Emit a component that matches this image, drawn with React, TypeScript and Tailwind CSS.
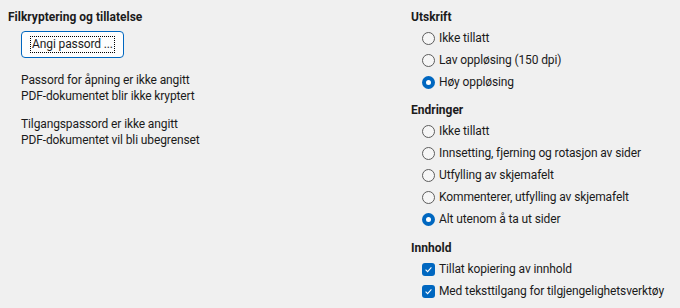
import React from "react";

const font = { fontFamily: 'Roboto, "Noto Sans", sans-serif' };

function Radio({ label, checked }: { label: string; checked?: boolean }) {
  return (
    <div className="flex items-center h-[22px] pl-[11px]">
      {checked ? (
        <span className="w-[13px] h-[13px] rounded-full bg-[#0067c0] flex items-center justify-center">
          <span className="w-[5px] h-[5px] rounded-full bg-white" />
        </span>
      ) : (
        <span className="w-[13px] h-[13px] rounded-full border border-[#5c5c5c] bg-[#f6f6f6]" />
      )}
      <span className="ml-[4px] text-[12px] tracking-[-0.12px] text-[#1b1b1b]">{label}</span>
    </div>
  );
}

function Check({ label }: { label: string }) {
  return (
    <div className="flex items-center h-[22px] pl-[11px]">
      <span className="w-[13px] h-[13px] rounded-[3px] bg-[#0067c0] flex items-center justify-center">
        <svg width="9" height="9" viewBox="0 0 9 9">
          <path d="M1.6 4.7 L3.6 6.6 L7.4 2.4" stroke="white" strokeWidth="1.1" fill="none" />
        </svg>
      </span>
      <span className="ml-[4px] text-[12px] tracking-[-0.12px] text-[#1b1b1b]">{label}</span>
    </div>
  );
}

export default function App() {
  return (
    <div className="w-[680px] h-[308px] bg-[#f0f0f0] flex text-[#1b1b1b]" style={font}>
      <div className="w-[403px] pl-[8px] pt-[8px]">
        <div className="text-[12px] font-bold leading-[18px]">Filkryptering og tillatelse</div>
        <div className="pl-[13px] mt-[5px]">
          <button className="w-[103px] h-[27px] border border-[#0067c0] rounded-[4px] bg-[#fdfdfd] flex items-center justify-center">
            <span className="text-[12px] tracking-[-0.12px] leading-[15px] px-[1px] outline outline-1 outline-dotted outline-black">Angi passord ...</span>
          </button>
          <div className="mt-[14px] text-[12px] tracking-[-0.12px] leading-[16px]">
            <div>Passord for åpning er ikke angitt</div>
            <div>PDF-dokumentet blir ikke kryptert</div>
          </div>
          <div className="mt-[12px] text-[12px] tracking-[-0.12px] leading-[16px]">
            <div>Tilgangspassord er ikke angitt</div>
            <div>PDF-dokumentet vil bli ubegrenset</div>
          </div>
        </div>
      </div>
      <div className="flex-1 pl-[8px] pt-[8px]">
        <div className="text-[12px] font-bold leading-[18px]">Utskrift</div>
        <div className="mt-[1px]">
          <Radio label="Ikke tillatt" />
          <Radio label="Lav oppløsing (150 dpi)" />
          <Radio label="Høy oppløsing" checked />
        </div>
        <div className="text-[12px] font-bold leading-[18px] mt-[8px]">Endringer</div>
        <div className="mt-[1px]">
          <Radio label="Ikke tillatt" />
          <Radio label="Innsetting, fjerning og rotasjon av sider" />
          <Radio label="Utfylling av skjemafelt" />
          <Radio label="Kommenterer, utfylling av skjemafelt" />
          <Radio label="Alt utenom å ta ut sider" checked />
        </div>
        <div className="text-[12px] font-bold leading-[18px] mt-[9px]">Innhold</div>
        <div className="mt-[1px]">
          <Check label="Tillat kopiering av innhold" />
          <Check label="Med teksttilgang for tilgjengelighetsverktøy" />
        </div>
      </div>
    </div>
  );
}
